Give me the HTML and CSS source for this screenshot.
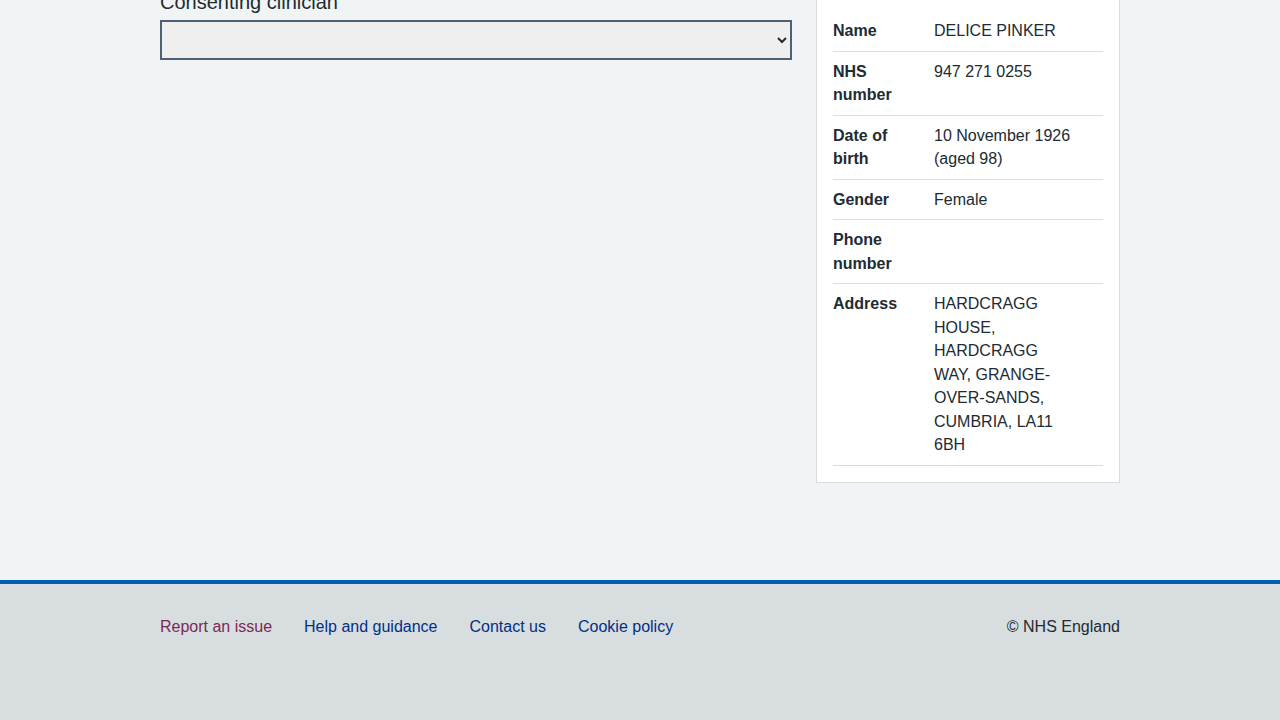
FILE: index.html
```html
<!DOCTYPE html>
<html lang="en">
<head>
<meta charset="utf-8">
<title>Consent</title>
<link rel="stylesheet" href="styles.css">
</head>
<body>
<main class="main">
  <div class="layout">
    <div class="form-col">
      <label class="label" for="clinician">Consenting clinician</label>
      <select class="select" id="clinician" name="clinician">
        <option value=""></option>
      </select>
    </div>
    <aside class="card">
      <dl class="summary">
        <div class="row"><dt class="key">Name</dt><dd class="value">DELICE PINKER</dd></div>
        <div class="row"><dt class="key">NHS number</dt><dd class="value">947 271 0255</dd></div>
        <div class="row"><dt class="key">Date of birth</dt><dd class="value">10 November 1926 (aged 98)</dd></div>
        <div class="row"><dt class="key">Gender</dt><dd class="value">Female</dd></div>
        <div class="row"><dt class="key">Phone number</dt><dd class="value"></dd></div>
        <div class="row"><dt class="key">Address</dt><dd class="value">HARDCRAGG HOUSE, HARDCRAGG WAY, GRANGE-OVER-SANDS, CUMBRIA, LA11 6BH</dd></div>
      </dl>
    </aside>
  </div>
</main>
<footer class="footer">
  <div class="footer-inner">
    <ul class="footer-links">
      <li><a class="footer-link visited" href="#">Report an issue</a></li>
      <li><a class="footer-link" href="#">Help and guidance</a></li>
      <li><a class="footer-link" href="#">Contact us</a></li>
      <li><a class="footer-link" href="#">Cookie policy</a></li>
    </ul>
    <p class="copyright">© NHS England</p>
  </div>
</footer>
</body>
</html>
```
FILE: styles.css
```css
* { box-sizing: border-box; }
html, body {
  margin: 0;
  padding: 0;
}
body {
  background: #f0f4f5;
  color: #212b32;
  font-family: "Liberation Sans", Arial, sans-serif;
  font-size: 16px;
  line-height: 23.5px;
}
.main {
  width: 960px;
  margin: -12px auto 0;
  padding-bottom: 97px;
}
.layout {
  display: grid;
  grid-template-columns: 632px 304px;
  column-gap: 24px;
  align-items: start;
}
.label {
  display: block;
  font-size: 20px;
  line-height: 28px;
  margin-bottom: 4px;
}
.select {
  display: block;
  width: 632px;
  height: 40px;
  border: 2px solid #4c6272;
  border-radius: 0;
  background-color: #efefef;
  color: #212b32;
  font-family: inherit;
  font-size: 16px;
  padding: 4px 8px;
  margin: 0;
}
.card {
  background: #ffffff;
  border: 1px solid #d8dde0;
  padding: 22px 16px 16px;
}
.summary {
  margin: 0;
}
.row {
  display: flex;
  border-bottom: 1px solid #d8dde0;
  padding: 8px 0;
}
.key {
  width: 101px;
  padding-right: 24px;
  font-weight: 700;
  margin: 0;
  flex: none;
}
.value {
  width: 145px;
  margin: 0;
  flex: none;
}
.footer {
  background: #d8dde0;
  border-top: 4px solid #005eb8;
  min-height: 150px;
}
.footer-inner {
  width: 960px;
  margin: 0 auto;
  padding-top: 31px;
  display: flex;
  justify-content: space-between;
  align-items: flex-start;
}
.footer-links {
  list-style: none;
  margin: 0;
  padding: 0;
  display: flex;
  gap: 32px;
}
.footer-link {
  color: #003087;
  text-decoration: none;
  line-height: 24px;
}
.footer-link.visited {
  color: #7c2855;
}
.copyright {
  margin: 0;
  line-height: 24px;
  color: #212b32;
}
```
